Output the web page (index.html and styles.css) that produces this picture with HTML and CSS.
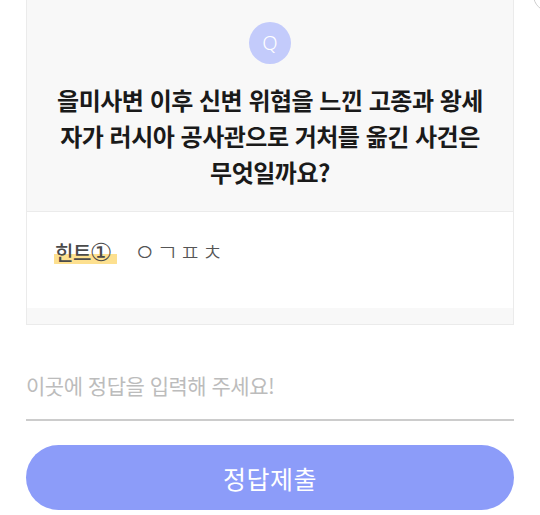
FILE: index.html
```html
<!DOCTYPE html>
<html lang="ko">
<head>
<meta charset="utf-8">
<link rel="stylesheet" href="styles.css">
</head>
<body>
<div class="page">
  <div class="card">
    <div class="question">
      <div class="q-badge">Q</div>
      <p class="q-text">을미사변 이후 신변 위협을 느낀 고종과 왕세자가 러시아 공사관으로 거처를 옮긴 사건은 무엇일까요?</p>
    </div>
    <div class="hint">
      <span class="hint-label">힌트<span class="hint-num">①</span></span>
      <span class="hint-value">ㅇㄱㅍㅊ</span>
    </div>
    <div class="card-foot"></div>
  </div>
  <input class="answer" type="text" placeholder="이곳에 정답을 입력해 주세요!">
  <button class="submit" type="button">정답제출</button>
</div>
<div class="corner-btn"></div>
</body>
</html>
```

FILE: styles.css
```css
html, body {
  margin: 0;
  padding: 0;
  background: #ffffff;
  font-family: "Noto Sans CJK KR", "Noto Sans", sans-serif;
  overflow: hidden;
}
.page {
  padding: 0 26px 0 26px;
  width: 488px;
}
.card {
  border: 1px solid #ebebeb;
  border-top: none;
  background: #ffffff;
}
.question {
  background: #f8f8f8;
  border-bottom: 1px solid #ebebeb;
  padding: 22px 26px 21px;
  display: flex;
  flex-direction: column;
  align-items: center;
}
.q-badge {
  width: 42px;
  height: 42px;
  border-radius: 50%;
  background: #c3cbfb;
  color: #ffffff;
  font-family: "Noto Sans", sans-serif;
  font-size: 20px;
  font-weight: 300;
  line-height: 42px;
  text-align: center;
}
.q-text {
  margin: 18px 0 0;
  font-size: 24px;
  line-height: 36px;
  font-weight: 700;
  color: #1a1a1a;
  text-align: center;
  letter-spacing: -0.5px;
}
.hint {
  height: 96px;
  padding: 26px 27px 0;
  box-sizing: border-box;
  display: flex;
  align-items: baseline;
}
.hint-label {
  font-size: 20px;
  line-height: 26px;
  font-weight: 500;
  color: #4a4a4a;
  padding: 0 5px 0 1px;
  background: linear-gradient(to bottom, transparent 52%, #fde08f 52%, #fde08f 92%, transparent 92%);
  border-radius: 3px;
  letter-spacing: -0.5px;
}
.hint-num {
  font-family: "DejaVu Sans", sans-serif;
  font-size: 25px;
  line-height: 1;
  font-weight: 400;
  margin-left: -1px;
}
.hint-value {
  margin-left: 17px;
  font-size: 24px;
  line-height: 26px;
  font-weight: 300;
  color: #555555;
  letter-spacing: 0.5px;
}
.card-foot {
  height: 16px;
  background: #f8f8f8;
}
.answer {
  display: block;
  width: 100%;
  box-sizing: border-box;
  margin: 33px 0 0;
  height: 63px;
  border: none;
  border-bottom: 2px solid #cccccc;
  padding: 0 0 8px;
  font-family: "Noto Sans CJK KR", sans-serif;
  font-size: 21px;
  color: #333;
  background: transparent;
  outline: none;
  letter-spacing: -0.5px;
}
.answer::placeholder {
  color: #bcbcbc;
}
.submit {
  display: block;
  width: 100%;
  margin-top: 24px;
  height: 65px;
  border: none;
  border-radius: 33px;
  background: #8c9cf9;
  color: #ffffff;
  font-family: "Noto Sans CJK KR", sans-serif;
  font-size: 25px;
  letter-spacing: 0.5px;
}
.corner-btn {
  position: absolute;
  left: 533px;
  top: -22px;
  width: 32px;
  height: 32px;
  border-radius: 50%;
  border: 1px solid #cfcfcf;
}
```
